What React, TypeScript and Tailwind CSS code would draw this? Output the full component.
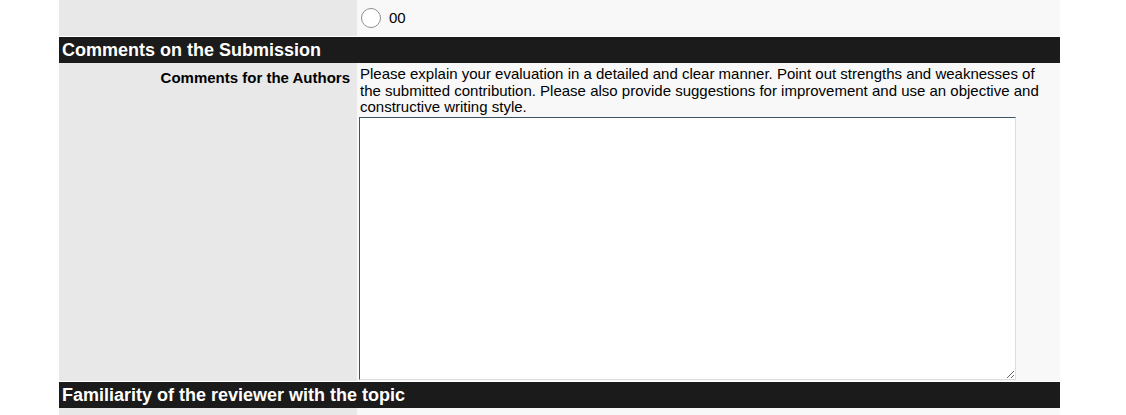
export default function App() {
  return (
    <div className="w-[1126px] h-[415px] overflow-hidden bg-white font-['Liberation_Sans',Arial,sans-serif] text-black">
      <div className="ml-[59px] w-[1001px] flex flex-col">
        {/* answer row */}
        <div className="flex h-[36px]">
          <div className="w-[298px] bg-[#e8e8e8]"></div>
          <div className="flex-1 bg-[#f8f8f8] flex items-center pl-[4px] gap-[8px]">
            <span className="w-[20px] h-[20px] rounded-full border border-[#8f8f8f] bg-white"></span>
            <span className="text-[15px]">00</span>
          </div>
        </div>

        <div className="h-[1px]"></div>
        <div className="h-[26px] bg-[#1b1b1b] text-white font-bold text-[18px] leading-[26px] pl-[3px]">
          Comments on the Submission
        </div>

        <div className="flex h-[318px]">
          <div className="w-[298px] bg-[#e8e8e8] text-right pr-[7px] pt-[6px] font-bold text-[15px] leading-[17px]">
            Comments for the Authors
          </div>
          <div className="flex-1 bg-[#f8f8f8] pl-[2px] pt-[3px]">
            <p className="text-[15px] leading-[16.7px] w-[690px] pl-[1px]">
              Please explain your evaluation in a detailed and clear manner. Point out strengths and weaknesses of the
              submitted contribution. Please also provide suggestions for improvement and use an objective and
              constructive writing style.
            </p>
            <textarea className="block mt-[1px] w-[657px] h-[263px] bg-white border border-t-[#3b5566] border-l-[#3b5566] border-r-[#dedede] border-b-[#dedede] resize outline-none"></textarea>
          </div>
        </div>

        <div className="h-[1px]"></div>
        <div className="h-[26px] bg-[#1b1b1b] text-white font-bold text-[18px] leading-[26px] pl-[3px]">
          Familiarity of the reviewer with the topic
        </div>

        <div className="flex h-[20px]">
          <div className="w-[298px] bg-[#e8e8e8]"></div>
          <div className="flex-1 bg-[#f8f8f8]"></div>
        </div>
      </div>
    </div>
  );
}
